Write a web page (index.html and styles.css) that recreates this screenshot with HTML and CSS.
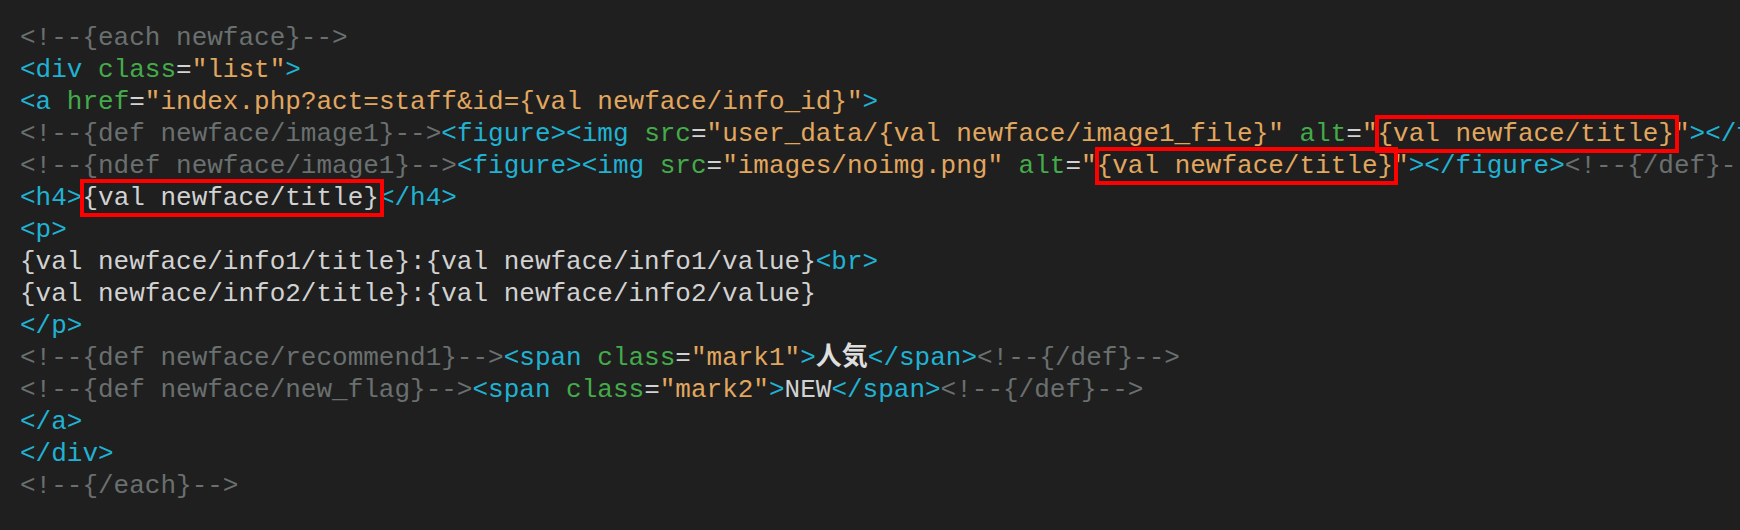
FILE: index.html
```html
<!DOCTYPE html>
<html>
<head>
<meta charset="utf-8">
<title>newface template</title>
<link rel="stylesheet" href="styles.css">
</head>
<body>
<pre class="code"><span class="cm">&lt;!--{each newface}--&gt;</span>
<span class="tg">&lt;div</span> <span class="at">class</span>=<span class="st">"list"</span><span class="tg">&gt;</span>
<span class="tg">&lt;a</span> <span class="at">href</span>=<span class="st">"index.php?act=staff&amp;id={val newface/info_id}"</span><span class="tg">&gt;</span>
<span class="cm">&lt;!--{def newface/image1}--&gt;</span><span class="tg">&lt;figure&gt;&lt;img</span> <span class="at">src</span>=<span class="st">"user_data/{val newface/image1_file}"</span> <span class="at">alt</span>=<span class="st">"<span class="mark">{val newface/title}</span>"</span><span class="tg">&gt;&lt;/figure&gt;</span><span class="cm">&lt;!--{/def}--&gt;</span>
<span class="cm">&lt;!--{ndef newface/image1}--&gt;</span><span class="tg">&lt;figure&gt;&lt;img</span> <span class="at">src</span>=<span class="st">"images/noimg.png"</span> <span class="at">alt</span>=<span class="st">"<span class="mark">{val newface/title}</span>"</span><span class="tg">&gt;&lt;/figure&gt;</span><span class="cm">&lt;!--{/def}--&gt;</span>
<span class="tg">&lt;h4&gt;</span><span class="mark">{val newface/title}</span><span class="tg">&lt;/h4&gt;</span>
<span class="tg">&lt;p&gt;</span>
{val newface/info1/title}:{val newface/info1/value}<span class="tg">&lt;br&gt;</span>
{val newface/info2/title}:{val newface/info2/value}
<span class="tg">&lt;/p&gt;</span>
<span class="cm">&lt;!--{def newface/recommend1}--&gt;</span><span class="tg">&lt;span</span> <span class="at">class</span>=<span class="st">"mark1"</span><span class="tg">&gt;</span><span class="jp">人気</span><span class="tg">&lt;/span&gt;</span><span class="cm">&lt;!--{/def}--&gt;</span>
<span class="cm">&lt;!--{def newface/new_flag}--&gt;</span><span class="tg">&lt;span</span> <span class="at">class</span>=<span class="st">"mark2"</span><span class="tg">&gt;</span>NEW<span class="tg">&lt;/span&gt;</span><span class="cm">&lt;!--{/def}--&gt;</span>
<span class="tg">&lt;/a&gt;</span>
<span class="tg">&lt;/div&gt;</span>
<span class="cm">&lt;!--{/each}--&gt;</span></pre>
</body>
</html>
```

FILE: styles.css
```css
html,body{
    margin: 0;
    padding: 0;
    background-color: #1f1f1f;
}
body{
    overflow: hidden;
}
.code{
    margin: 0;
    padding: 22px 0 0 20px;
    font-family: "Liberation Mono", "DejaVu Sans Mono", monospace;
    font-size: 26px;
    line-height: 32px;
    color: #d2d2d2;
    white-space: pre;
}
.code .cm{
    color: #6a6f6f;
}
.code .tg{
    color: #1fb2d3;
}
.code .at{
    color: #44ab4a;
}
.code .st{
    color: #e2a75f;
}
.code .jp{
    font-family: "Noto Sans CJK JP", sans-serif;
    font-weight: bold;
    line-height: 0;
    color: #dedede;
}
/* red box drawn over the template value */
.code .mark{
    position: relative;
}
.code .mark::after{
    content: "";
    position: absolute;
    left: -2px;
    right: -5px;
    top: -4px;
    bottom: -4px;
    border: 4px solid #ff0000;
}
```
